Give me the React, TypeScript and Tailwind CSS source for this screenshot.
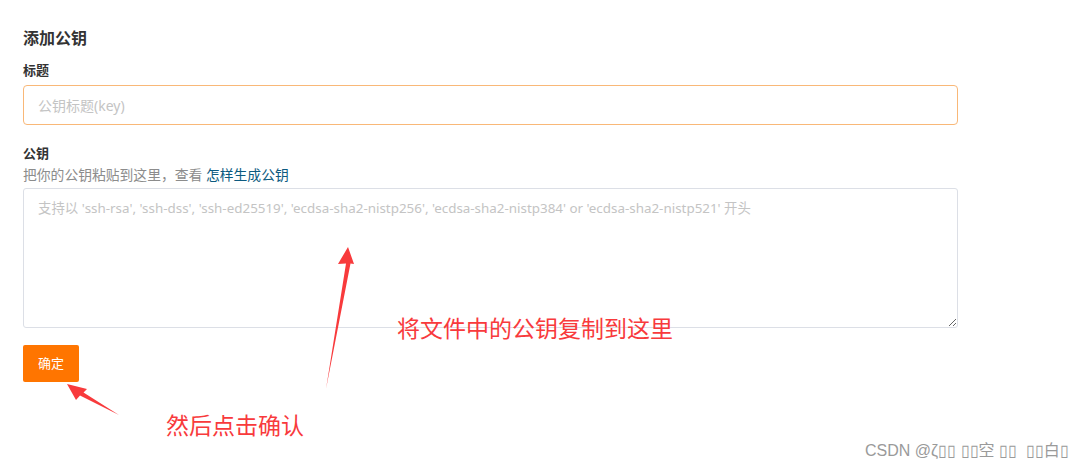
import { useState } from "react";

const font = "font-['Noto_Sans','Noto_Sans_CJK_SC',sans-serif]";

export default function App() {
  const [title, setTitle] = useState("");
  const [key, setKey] = useState("");

  return (
    <div className={`relative h-[471px] w-[1087px] overflow-hidden bg-white ${font}`}>
      <form className="flex w-[958px] flex-col items-start pl-[23px] pt-[26px]">
        <h2 className="text-[16px] font-bold leading-[24px] text-[#333]">添加公钥</h2>

        {/* 标题 */}
        <div className="mt-[10px] flex w-full flex-col gap-[5px]">
          <label className="text-[13px] font-bold leading-[20px] text-[#333]">标题</label>
          <input
            value={title}
            onChange={(e) => setTitle(e.target.value)}
            placeholder="公钥标题(key)"
            className="h-[40px] w-full rounded-[4px] border border-[#f9b878] px-[14px] text-[14px] text-[#333] outline-none placeholder:text-[#c4c4c4]"
          />
        </div>

        {/* 公钥 */}
        <div className="mt-[18px] flex w-full flex-col">
          <label className="text-[13px] font-bold leading-[20px] text-[#333]">公钥</label>
          <p className="mt-[2px] text-[13.8px] leading-[20px] text-[#8c8c8c]">
            把你的公钥粘贴到这里，查看 <a className="text-[#0c5a80]">怎样生成公钥</a>
          </p>
          <textarea
            value={key}
            onChange={(e) => setKey(e.target.value)}
            placeholder="支持以 'ssh-rsa', 'ssh-dss', 'ssh-ed25519', 'ecdsa-sha2-nistp256', 'ecdsa-sha2-nistp384' or 'ecdsa-sha2-nistp521' 开头"
            className="mt-[3px] h-[140px] w-full rounded-[3px] border border-[#dcdfe6] px-[14px] py-[9px] text-[13.4px] leading-[20px] text-[#333] outline-none placeholder:text-[#c4c4c4]"
          />
        </div>

        <button type="button" className="mt-[17px] h-[37px] w-[56px] rounded-[2px] bg-[#ff7500] text-[13px] text-white">确定</button>
      </form>

      {/* annotations */}
      <svg className="pointer-events-none absolute left-0 top-0" width="1087" height="471">
        <path d="M348 247 L354 264 L350.5 263.5 L326 389 L346 263.5 L338 264 Z" fill="#f83a3c" />
        <path d="M67 384 L87 389 L83.5 392.5 L119 415 L80 395.5 L76 400 Z" fill="#f83a3c" />
      </svg>
      <span className="absolute left-[397px] top-[313px] text-[23px] leading-[30px] text-[#f83a3c]">将文件中的公钥复制到这里</span>
      <span className="absolute left-[166px] top-[410px] text-[23px] leading-[30px] text-[#f83a3c]">然后点击确认</span>
      <span className="absolute left-[865px] top-[440px] font-['Liberation_Sans','Noto_Sans_CJK_SC',sans-serif] text-[16px] leading-[22px] text-[#9a9a9a]">
        CSDN @ζ▯▯ ▯▯空 ▯▯ &nbsp;▯▯白▯
      </span>
    </div>
  );
}
